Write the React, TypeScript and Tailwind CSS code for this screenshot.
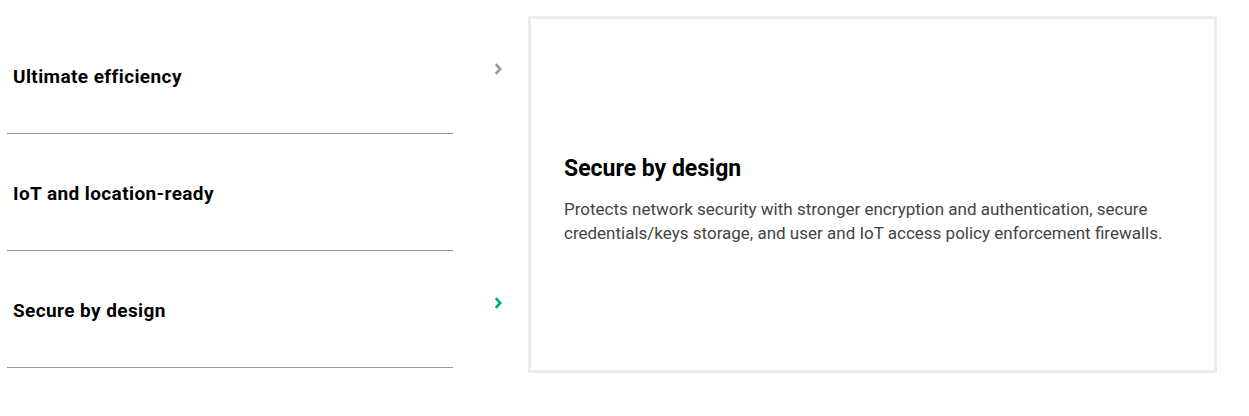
import React, { useState } from 'react';

const items = [
  {
    title: 'Ultimate efficiency',
    body: 'Delivers optimal performance with less power, simplified management and flexible deployment options.',
  },
  {
    title: 'IoT and location-ready',
    body: 'Supports IoT devices and location-based services out of the box.',
  },
  {
    title: 'Secure by design',
    body: 'Protects network security with stronger encryption and authentication, secure credentials/keys storage, and user and IoT access policy enforcement firewalls.',
  },
];

const Chevron: React.FC<{ active: boolean }> = ({ active }) => (
  <svg width="10" height="14" viewBox="0 0 10 14" fill="none">
    <path
      d="M2.8 2.2 L7.2 7 L2.8 11.8"
      stroke={active ? '#01a982' : '#9a9a9a'}
      strokeWidth="2.6"
      strokeLinecap="butt"
      strokeLinejoin="miter"
    />
  </svg>
);

export default function App() {
  const [selected, setSelected] = useState(2);
  const current = items[selected];

  return (
    <div className="w-[1249px] h-[416px] bg-white flex pt-4 pl-[7px] font-['Roboto',sans-serif]">
      <div className="flex flex-col mt-px">
        {items.map((item, i) => (
          <button
            key={item.title}
            onClick={() => setSelected(i)}
            className="flex h-[117px] text-left"
          >
            <div className="w-[446px] h-full border-b border-[#999999] flex items-center pl-[6px] pt-[4px]">
              <span className="text-[19px] font-bold text-black tracking-[0.4px]">{item.title}</span>
            </div>
            <div className="w-[75px] pt-[45px] pl-[40px]">
              {i !== 1 && <Chevron active={i === selected} />}
            </div>
          </button>
        ))}
      </div>

      <div className="w-[689px] h-[357px] border-[3px] border-[#ececec] flex flex-col justify-center px-[33px] pt-[11px]">
        <h3 className="text-[23px] leading-[28px] font-bold text-black mb-[14px]">{current.title}</h3>
        <p className="text-[17px] leading-[24px] text-[#444444] max-w-[620px]">{current.body}</p>
      </div>
    </div>
  );
}
